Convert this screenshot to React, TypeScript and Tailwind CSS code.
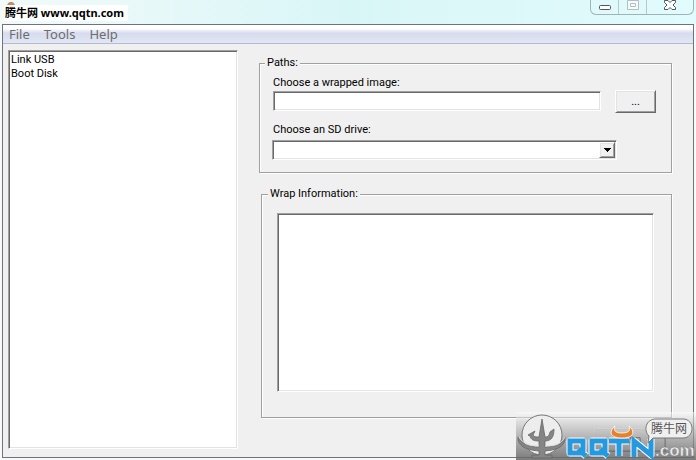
import React from "react";

const sunken =
  "border border-t-[#a0a0a0] border-l-[#a0a0a0] border-r-white border-b-white bg-white shadow-[inset_1px_1px_0_#696969,inset_-1px_-1px_0_#e3e3e3] outline-none rounded-none";
const raised =
  "border border-t-white border-l-white border-r-[#696969] border-b-[#696969] bg-[#f0f0f0] shadow-[inset_1px_1px_0_#e3e3e3,inset_-1px_-1px_0_#a0a0a0]";
const group =
  "min-w-0 border border-[#a0a0a0] shadow-[1px_1px_0_#fff,inset_1px_1px_0_#fff]";

const TitleBar = () => (
  <header className="flex h-6 items-start justify-between bg-linear-to-r from-[#f2fafa] via-[#d9f6f7] to-[#e2fbfc] pr-0.5">
    <div className="relative">
      <svg className="absolute left-[6px] top-[1px]" width="10" height="6" viewBox="0 0 10 6">
        <path d="M1 6C1 2 3 1 5 1s4 1 4 5z" fill="#c98a5e" />
      </svg>
      <p className="relative mt-[5px] ml-1 h-4 bg-white px-px pr-1 font-['Noto_Sans','Noto_Sans_CJK_SC',sans-serif] text-[11px] leading-4 font-bold whitespace-nowrap text-black">
        腾牛网 www.qqtn.com
      </p>
    </div>
    <div className="flex h-[15px] rounded-b-md border border-t-0 border-[#9db5b8]">
      <button aria-label="Minimize" className="flex w-7 justify-center border-r border-[#b5c9cb]">
        <svg width="14" height="14" viewBox="0 0 14 14">
          <rect x="1.5" y="5.5" width="11" height="4" rx="1" fill="#fff" stroke="#51565c" />
        </svg>
      </button>
      <button aria-label="Maximize" disabled className="flex w-7 justify-center border-r border-[#b5c9cb]">
        <svg width="12" height="14" viewBox="0 0 12 14">
          <path d="M.5.5h11v9H.5zM3.5 3.5h5v3h-5z" fill="#f4fbfb" stroke="#b4bec0" />
        </svg>
      </button>
      <button aria-label="Close" className="flex w-[46px] justify-center">
        <svg width="12" height="14" viewBox="0 0 12 14">
          <path
            d="M.5.5h3.500L6 2.500 8 .5h3.500v2L9 5l2.500 2.500v2H8L6 7.500 4 9.500H.5v-2L3 5 .5 2.500z"
            fill="#fff"
            stroke="#51565c"
          />
        </svg>
      </button>
    </div>
  </header>
);

const letters =
  "M54 29h13v12H54zM62 37l8 7M76 29h13v12H76zM84 37l8 7M93 29h20M103 29v15M118 45V29l17 14V27";

const Watermark = () => (
  <div className="pointer-events-none absolute right-0 bottom-0 h-12 w-[180px] bg-linear-to-b from-white/50 to-[#666]/85">
    <svg width="180" height="48" viewBox="0 0 180 48">
      <circle cx="26" cy="23" r="20" fill="#ededed" stroke="#777" />
      <path
        d="M2 25c3 7 11 10 21 10v-6c-5 0-8-1-9-5l-2-1 7-4-2 4c1 2 3 2 6 2l3-18 3 18c3 0 4-1 5-5l4-3c0 7-2 12-9 12v6c11 0 18-3 20-10 1 8-6 13-20 14v4h7v3H16v-3h7v-4C9 38 1 33 2 25z"
        fill="#858585"
        stroke="#666"
        strokeWidth=".8"
      />
      <path
        d="M3 25c4 7 12 9 20 9M29 34c9 0 17-2 20-9"
        fill="none"
        stroke="#ddd"
        strokeWidth="1"
      />
      <g fill="none">
        <path d={letters} stroke="#fff" strokeWidth="7" strokeLinejoin="round" />
        <path d={letters} stroke="#2599df" strokeWidth="5" />
      </g>
      <path
        d="M99 14c-6 5-6 12 7 12s13-7 7-12c2 5-1 7-7 7s-9-2-7-7z"
        fill="#e8822a"
        stroke="#fff"
        strokeWidth=".8"
      />
      <text
        x="139"
        y="44"
        fill="#eee"
        stroke="#777"
        strokeWidth=".4"
        fontSize="17"
        fontWeight="bold"
        fontFamily="'Liberation Sans', sans-serif"
      >
        .com
      </text>
      <path
        d="M140 7h27c12 0 12 19 0 19h-30l-5 5 1-7c-6-6-3-17 7-17z"
        fill="#f0f0f0"
        stroke="#777"
      />
      <text x="135" y="21" fill="#555" fontSize="12" fontFamily="'Noto Sans CJK SC', sans-serif">
        腾牛网
      </text>
    </svg>
  </div>
);

const App = () => {
  return (
    <div className="relative min-h-[460px] bg-[#f6fafa] font-['Roboto',sans-serif] text-[11px] leading-[14px] text-black">
      <TitleBar />
      <div className="mr-[2px] ml-[2px] border border-[#707478] bg-[#f0f0f0]">
        <nav className="flex h-[19px] items-center gap-[14px] border-b border-[#b4bad0] bg-linear-to-b from-white from-20% via-[#d6dbee] via-45% to-[#e2e7f5] pl-[6px] font-['Noto_Sans',sans-serif] text-[13px] text-[#6d6d6d]">
          <button>File</button>
          <button>Tools</button>
          <button>Help</button>
        </nav>
        <div className="flex h-[413px] pt-1.5 pr-[21px] pb-2 pl-[5px]">
          <ul className={`w-[230px] shrink-0 py-0.5 pl-[2px] ${sunken}`}>
            <li>Link USB</li>
            <li>Boot Disk</li>
          </ul>
          <main className="ml-[21px] flex min-w-0 flex-1 flex-col pt-1.5">
            <fieldset className={`pr-[15px] pb-3 pl-[13px] ${group}`}>
              <legend className="-ml-2 bg-[#f0f0f0] px-0.5">Paths:</legend>
              <label htmlFor="image" className="mt-1.5 block">
                Choose a wrapped image:
              </label>
              <div className="flex items-start gap-3.5">
                <input id="image" className={`mt-px h-5 min-w-0 flex-1 px-1 ${sunken}`} />
                <button aria-label="Browse" className={`h-[23px] w-[41px] ${raised}`}>
                  ...
                </button>
              </div>
              <label htmlFor="drive" className="mt-2.5 block">
                Choose an SD drive:
              </label>
              <div className="relative mt-[3px] mr-[39px] -ml-px">
                <select id="drive" className={`block h-5 w-full appearance-none ${sunken}`} />
                <span className={`pointer-events-none absolute top-0.5 right-0.5 flex h-4 w-4 items-center justify-center ${raised}`}>
                  <svg width="7" height="4" viewBox="0 0 7 4" shapeRendering="crispEdges">
                    <path d="M0 0h7L3.500 4z" />
                  </svg>
                </span>
              </div>
            </fieldset>
            <fieldset className={`mt-3.5 ml-0.5 pr-[17px] pb-[25px] pl-[15px] ${group}`}>
              <legend className="-ml-[9px] bg-[#f0f0f0] px-0.5">Wrap Information:</legend>
              <textarea aria-label="Wrap Information" className={`mt-3 block h-[179px] w-full resize-none ${sunken}`} />
            </fieldset>
            <button className={`mt-2.5 mr-[6px] h-6 w-[72px] shrink-0 self-end ${raised}`}>Burn</button>
          </main>
        </div>
      </div>
      <Watermark />
    </div>
  );
};

export default App;
